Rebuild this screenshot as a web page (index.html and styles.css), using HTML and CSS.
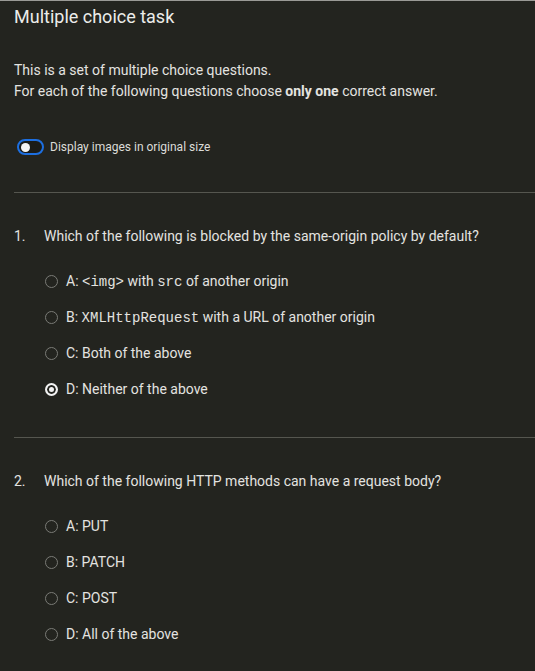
FILE: index.html
```html
<!DOCTYPE html>
<html lang="en">
<head>
<meta charset="utf-8">
<title>Multiple choice task</title>
<link rel="stylesheet" href="styles.css">
</head>
<body>
<div class="page">
  <header class="head">
    <h1 class="title">Multiple choice task</h1>
  </header>
  <div class="intro">
    <p class="intro-line">This is a set of multiple choice questions.</p>
    <p class="intro-line">For each of the following questions choose <b>only one</b> correct answer.</p>
  </div>
  <label class="toggle-row">
    <span class="toggle"><span class="knob"></span></span>
    <span class="toggle-label">Display images in original size</span>
  </label>

  <hr class="sep">
  <section class="question">
    <div class="q-text"><span class="q-num">1.</span><span>Which of the following is blocked by the same-origin policy by default?</span></div>
    <ul class="options">
      <li class="option"><span class="radio"></span><span>A: <code>&lt;img&gt;</code> with <code>src</code> of another origin</span></li>
      <li class="option"><span class="radio"></span><span>B: <code>XMLHttpRequest</code> with a URL of another origin</span></li>
      <li class="option"><span class="radio"></span><span>C: Both of the above</span></li>
      <li class="option"><span class="radio checked"></span><span>D: Neither of the above</span></li>
    </ul>
  </section>

  <hr class="sep">
  <section class="question">
    <div class="q-text"><span class="q-num">2.</span><span>Which of the following HTTP methods can have a request body?</span></div>
    <ul class="options">
      <li class="option"><span class="radio"></span><span>A: PUT</span></li>
      <li class="option"><span class="radio"></span><span>B: PATCH</span></li>
      <li class="option"><span class="radio"></span><span>C: POST</span></li>
      <li class="option"><span class="radio"></span><span>D: All of the above</span></li>
    </ul>
  </section>
</div>
</body>
</html>
```
FILE: styles.css
```css
html, body {
  margin: 0;
  padding: 0;
  background: #23241f;
}
body {
  font-family: Roboto, "Liberation Sans", sans-serif;
  color: #e3e3e0;
  font-size: 14px;
  min-height: 100vh;
}
.page {
  border-top: 1px solid #9a9a96;
  min-height: 670px;
}
.head {
  padding: 4px 14px 0;
}
.title {
  margin: 0;
  font-size: 18px;
  line-height: 24px;
  font-weight: 400;
  color: #ececea;
}
.intro {
  padding: 31px 14px 0;
}
.intro-line {
  margin: 0;
  line-height: 21px;
}
.intro-line b {
  font-weight: 700;
}
.toggle-row {
  display: flex;
  align-items: center;
  gap: 6px;
  margin: 37px 0 0 17px;
  height: 16px;
}
.toggle {
  box-sizing: border-box;
  width: 27px;
  height: 16px;
  border: 2px solid #1d6fe0;
  border-radius: 8px;
  background: #1b1c18;
  display: flex;
  align-items: center;
  padding-left: 2px;
}
.knob {
  width: 9px;
  height: 9px;
  border-radius: 50%;
  background: #f4f4f4;
}
.toggle-label {
  font-size: 12px;
  color: #dcdcd8;
}
.sep {
  border: 0;
  border-top: 1px solid #55564f;
  margin: 37px 0 0 14px;
  height: 0;
}
.question + .sep {
  margin-top: 30px;
}
.question {
  padding-top: 33px;
}
.q-text {
  display: flex;
  line-height: 20px;
  padding-left: 14px;
}
.q-num {
  width: 30px;
  flex: none;
}
.options {
  list-style: none;
  margin: 17px 0 0;
  padding: 0 0 0 45px;
}
.option {
  display: flex;
  align-items: center;
  gap: 8px;
  height: 36px;
}
.radio {
  box-sizing: border-box;
  flex: none;
  width: 13px;
  height: 13px;
  border: 1px solid #7a7b76;
  border-radius: 50%;
}
.radio.checked {
  border: 2px solid #f2f2f2;
  background: #f2f2f2;
  box-shadow: inset 0 0 0 2px #23241f;
}
code {
  font-family: "Liberation Mono", "DejaVu Sans Mono", monospace;
  font-size: 14px;
  font-weight: 400;
  color: #e3e3e0;
}
```
